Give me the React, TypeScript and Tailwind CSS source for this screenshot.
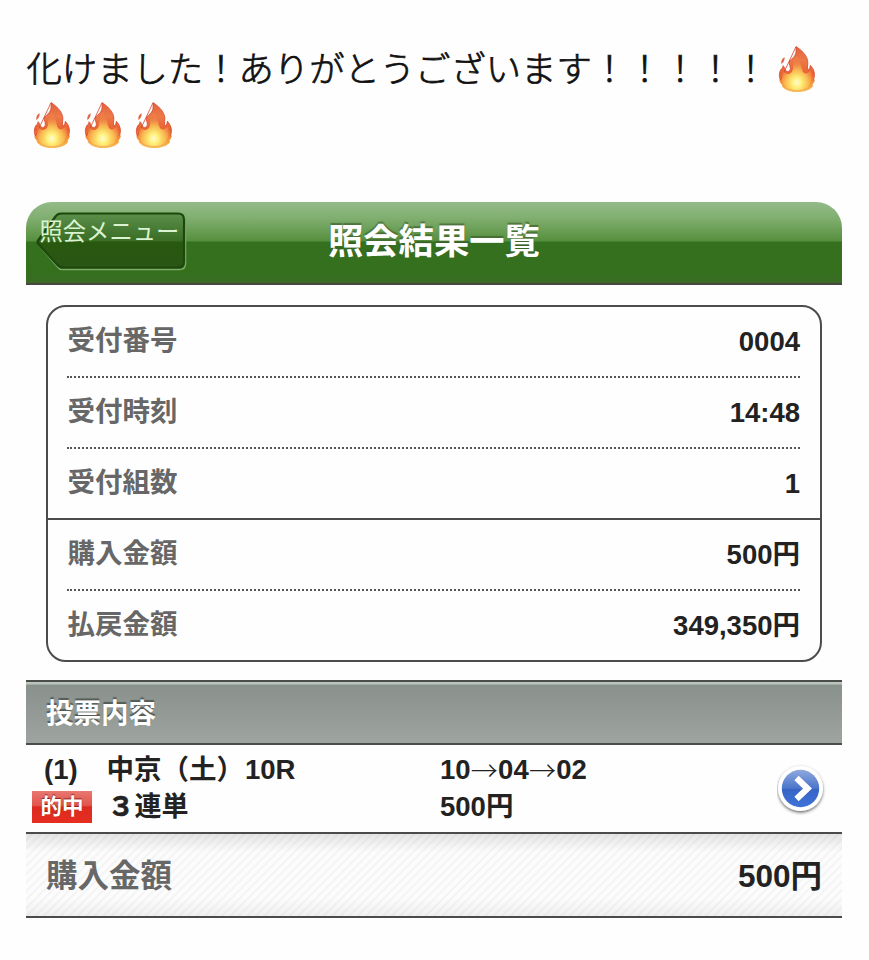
const details = [
  { label: '受付番号', value: '0004', line: 'dotted' },
  { label: '受付時刻', value: '14:48', line: 'dotted' },
  { label: '受付組数', value: '1', line: 'solid' },
  { label: '購入金額', value: '500円', line: 'dotted' },
  { label: '払戻金額', value: '349,350円', line: 'none' },
];

const Fire = () => (
  <svg viewBox="38 36 114 140" className="h-[46.7px] w-[38px] shrink-0">
    <defs>
      <linearGradient id="fireBody" x1="0" y1="0" x2="0" y2="1">
        <stop offset="0" stopColor="#e2613c" />
        <stop offset="0.3" stopColor="#ec7a47" />
        <stop offset="0.6" stopColor="#ea6232" />
        <stop offset="0.85" stopColor="#f7a03c" />
        <stop offset="1" stopColor="#f6bd5d" />
      </linearGradient>
      <radialGradient id="fireCore" cx="0.5" cy="0.78" r="0.62">
        <stop offset="0" stopColor="#fffbd0" />
        <stop offset="0.25" stopColor="#fff07a" />
        <stop offset="0.6" stopColor="#fbc556" stopOpacity="0.85" />
        <stop offset="1" stopColor="#f39a50" stopOpacity="0.15" />
      </radialGradient>
    </defs>
    <path
      d="M92 38C108 47 124 64 127 80C129 91 124 101 128 108C133 107 134 101 135 94C142 101 149 113 147 127C147 132 144 135 144 138L149 136C148 144 144 149 141 153L144 155C136 167 119 174 95 174C73 174 58 167 48 155L52 154C47 150 43 144 42 137L45 138C39 123 43 108 51 102C53 100 53 98 53 95C58 99 58 106 62 111C68 115 74 111 75 104C76 96 70 92 72 84C74 77 82 75 88 66C94 57 92 46 92 38Z"
      fill="url(#fireBody)"
    />
    <path
      d="M92 38C108 47 124 64 127 80C129 91 124 101 128 108C133 107 134 101 135 94C142 101 149 113 147 127C147 132 144 135 144 138M45 138C39 123 43 108 51 102C53 100 53 98 53 95C58 99 58 106 62 111C68 115 74 111 75 104C76 96 70 92 72 84C74 77 82 75 88 66C94 57 92 46 92 38Z"
      fill="none"
      stroke="#d6452a"
      strokeOpacity="0.8"
      strokeWidth="3"
    />
    <path
      d="M94 66C107 80 107 99 112 112C118 124 130 116 136 110C143 126 138 144 130 156C120 171 72 173 58 155C48 143 47 125 54 112C62 124 77 123 82 109C86 98 80 83 94 66Z"
      fill="url(#fireCore)"
    />
    <path d="M58 70C49 74 47 83 48 90C55 86 58 80 58 70Z" fill="#df6647" />
  </svg>
);

const BackButton = () => (
  <div className="relative h-[60px] w-[152px]">
    <svg viewBox="0 0 152 60" className="absolute inset-0 h-full w-full">
      <defs>
        <linearGradient id="backFill" x1="0" y1="0" x2="0" y2="1">
          <stop offset="0" stopColor="#5b904b" />
          <stop offset="0.5" stopColor="#3a6d25" />
          <stop offset="0.53" stopColor="#28590f" />
          <stop offset="1" stopColor="#2a5615" />
        </linearGradient>
      </defs>
      <path
        d="M24 3.5H143.5Q149.500 3.5 149.500 9.5V52.5Q149.500 58.500 143.500 58.500H26Q23.5 58.500 21.5 56L3 34"
        fill="none"
        stroke="#7fa86b"
        strokeWidth="1.5"
      />
      <path
        d="M25 2.5H142Q148 2.5 148 8.500V50.500Q148 56.500 142 56.500H27Q23.500 56.500 21 53.500L2 32.500Q1 31 2 29.500L19.500 5.500Q21.500 2.500 25 2.500Z"
        fill="url(#backFill)"
        stroke="#1d480c"
        strokeWidth="2.2"
      />
    </svg>
    <span className="relative block pt-[7px] pl-[3.5px] text-[23.3px] leading-[28px] whitespace-nowrap text-[#daf3d0]">
      照会メニュー
    </span>
  </div>
);

const Arrow = () => (
  <span className="w-[27.5px] text-center font-['Noto_Sans_CJK_JP'] text-[27px] font-light">→</span>
);

const App = () => {
  return (
    <div className="h-[960px] w-[869px] overflow-hidden bg-[#fefefe] px-[26px] font-['Liberation_Sans','Noto_Sans_CJK_JP',sans-serif] text-[#222]">
      <div className="flex h-[202px] flex-col pt-[41px] text-[35.35px] text-[#111]">
        <div className="flex h-[56px] items-center">
          <p className="w-[751.5px] pt-[2px] pl-[0.5px] leading-[56px] font-light whitespace-nowrap [-webkit-text-stroke:0.75px_#111]">
            化けました！ありがとうございます！！！！！
          </p>
          <Fire />
        </div>
        <div className="flex h-[56px] items-center gap-[13.4px] pl-[6.5px]">
          <Fire />
          <Fire />
          <Fire />
        </div>
      </div>

      <header className="grid h-[83px] w-[816px] grid-cols-[302px_212px_1fr] rounded-t-[26px] border-b-2 border-[#46483f] bg-[linear-gradient(to_bottom,#94ba88_0,#80af70_16px,#568f3d_39px,#34701f_40px,#34701c_70px,#3b6b25_100%)]">
        <div className="pt-[9px] pl-[10px]">
          <BackButton />
        </div>
        <h1 className="pt-px text-[35.3px] leading-[78px] font-bold whitespace-nowrap text-white [text-shadow:0_-2px_1px_#3a5b2caa]">
          照会結果一覧
        </h1>
      </header>

      <section className="mt-5 ml-5 h-[357px] w-[776px] rounded-[20px] border-2 border-[#4c4c4c] text-[27.5px] font-bold">
        {details.map((item) => (
          <div key={item.label} className={item.line === 'solid' ? 'border-b-2 border-[#4c4c4c]' : ''}>
            <div
              className={
                item.line === 'dotted'
                  ? 'mr-5 ml-[19px] flex h-[71px] items-center justify-between border-b-2 border-dotted border-[#555]'
                  : 'mr-5 ml-[19px] flex h-[69px] items-center justify-between'
              }
            >
              <span className="-mt-px pl-[0.5px] text-[#676767]">{item.label}</span>
              <span className="pt-px">{item.value}</span>
            </div>
          </div>
        ))}
      </section>

      <h2 className="mt-[18px] h-[65px] w-[816px] border-y-2 border-[#4b4d4b] bg-[linear-gradient(to_bottom,#bcc4be_0,#bcc4be_2px,#89918c_3px,#9ea49f_100%)] pt-[2px] pl-5 text-[27.5px] leading-[60px] font-bold text-white [text-shadow:0_-2px_1px_#555b57]">
        投票内容
      </h2>

      <div className="flex h-[87px] w-[816px] text-[27.5px] leading-[37px] font-bold">
        <div className="w-[414px] pt-[6px]">
          <p className="flex pl-[18px]">
            <span className="w-[62.5px]">(1)</span>
            <span className="w-[138.5px]">中京（土）</span>
            <span>10R</span>
          </p>
          <div className="flex items-center pl-[6px]">
            <span className="h-8 w-[60px] bg-[linear-gradient(to_bottom,#e87870,#e2554c_45%,#db2b20_50%,#e62d20)] pt-px text-center text-[21.5px] leading-[31px] text-white [text-shadow:0_-1px_1px_#8a1d18]">
              的中
            </span>
            <span className="ml-[15.5px] pt-px text-[27px]">
              <span className="[-webkit-text-stroke:0.6px_#222]">３</span>連単
            </span>
          </div>
        </div>
        <div className="w-[337px] pt-[6px]">
          <p className="flex">
            10
            <Arrow />
            04
            <Arrow />
            02
          </p>
          <p>500円</p>
        </div>
        <svg viewBox="0 0 52 52" className="mt-[18.5px] h-[52px] w-[52px]">
          <defs>
            <linearGradient id="goFill" x1="0" y1="0" x2="0" y2="1">
              <stop offset="0" stopColor="#8fa9dd" />
              <stop offset="0.5" stopColor="#4a74cb" />
              <stop offset="0.52" stopColor="#3765c5" />
              <stop offset="1" stopColor="#3f72d8" />
            </linearGradient>
            <filter id="goShadow" x="-20%" y="-20%" width="140%" height="140%">
              <feDropShadow dx="0" dy="1.5" stdDeviation="1.8" floodColor="#333" floodOpacity="0.75" />
            </filter>
          </defs>
          <circle cx="23.5" cy="24.5" r="22.5" fill="#fff" filter="url(#goShadow)" />
          <circle cx="23.5" cy="24.5" r="18.700" fill="url(#goFill)" />
          <path d="M19.500 14L30.500 24.500L19.500 35" fill="none" stroke="#fff" strokeWidth="6.200" />
        </svg>
      </div>

      <footer className="flex h-[86px] w-[816px] items-center justify-between border-y-2 border-[#4b4b4b] bg-[linear-gradient(to_bottom,#00000018,#00000000_22%,#00000000_78%,#0000000c),repeating-linear-gradient(135deg,#fcfcfc_0,#fcfcfc_3px,#f4f4f4_4px,#f4f4f4_5px,#fcfcfc_6px)] px-5 pt-[3px] text-[31.5px] font-bold">
        <span className="text-[#676767]">購入金額</span>
        <span>500円</span>
      </footer>
    </div>
  );
};

export default App;
